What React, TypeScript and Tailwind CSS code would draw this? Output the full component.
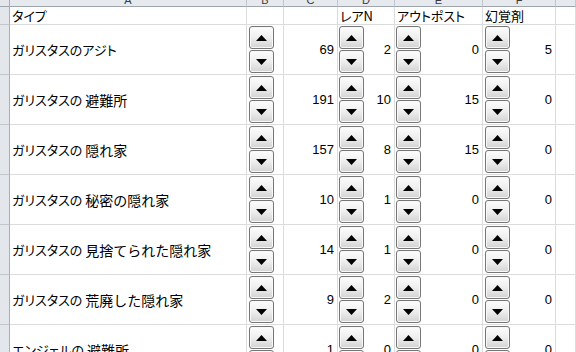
import React from "react";

const rows: [string, number, number, number, number][] = [
  ["ガリスタスのアジト", 69, 2, 0, 5],
  ["ガリスタスの避難所", 191, 10, 15, 0],
  ["ガリスタスの隠れ家", 157, 8, 15, 0],
  ["ガリスタスの秘密の隠れ家", 10, 1, 0, 0],
  ["ガリスタスの見捨てられた隠れ家", 14, 1, 0, 0],
  ["ガリスタスの荒廃した隠れ家", 9, 2, 0, 0],
  ["エンジェルの避難所", 1, 0, 0, 0],
];

const GRID = "grid grid-cols-[10px_237px_37px_54px_57px_88px_73px_1fr]";
const CELL = "border-r border-b border-[#dadcdd] bg-white";
const RH = "border-r border-b border-r-[#a9aeb4] border-b-[#c3c7cc] bg-[#e3e7ec]";
const JP = "font-['Noto_Sans_CJK_JP',sans-serif] [font-feature-settings:'palt'] text-[13px] text-black";
const JPN = "font-['Noto_Sans_CJK_JP',sans-serif] text-[14px] text-black";
const NUM = "font-['Liberation_Sans',sans-serif] text-[13px] text-black";

function Btn({ up }: { up: boolean }) {
  return (
    <div className="w-[25px] h-[23px] rounded-[3px] border border-[#767676] bg-linear-to-b from-[#fdfdfd] via-[#eeeeee] to-[#d3d3d3] flex items-center justify-center shadow-[inset_0_0_0_1px_#f8f8f8]">
      <svg width="11" height="6" viewBox="0 0 11 6">
        <path d={up ? "M5.5 0 L11 6 L0 6 Z" : "M0 0 L11 0 L5.5 6 Z"} fill="#000" />
      </svg>
    </div>
  );
}

function Spin() {
  return (
    <div className="flex flex-col gap-[1px]">
      <Btn up />
      <Btn up={false} />
    </div>
  );
}

function Num({ v }: { v: number }) {
  return <span className={`${NUM} ml-auto pr-[3px] leading-none`}>{v}</span>;
}

function Name({ text }: { text: string }) {
  const idx = text.indexOf("の");
  const prefix = text.slice(0, idx + 1);
  const rest = text.slice(idx + 1);
  const allKana = /^[\u30A0-\u30FF]*$/.test(rest);
  if (allKana) {
    return <span className={`${JP} text-[13.5px] leading-none whitespace-nowrap`}>{text}</span>;
  }
  return (
    <span className="flex items-center whitespace-nowrap leading-none">
      <span className={`${JP} text-[13.5px] leading-none`}>{prefix}</span>
      <span className={`${JPN} leading-none ml-[3px]`}>{rest}</span>
    </span>
  );
}

export default function App() {
  const letters = ["A", "B", "C", "D", "E", "F", ""];
  return (
    <div className="w-[576px] h-[352px] overflow-hidden bg-white">
      <div className={GRID}>
        {/* column header */}
        <div className="h-[7px] border-r border-b border-r-[#a9aeb4] border-b-[#9fa5ad] bg-[#e3e7ec]" />
        {letters.map((l, i) => (
          <div
            key={i}
            className="h-[7px] overflow-hidden border-r border-b border-r-[#c3c7cc] border-b-[#9fa5ad] bg-[#e6e9ed] flex items-end justify-center"
          >
            <span className="font-['Liberation_Sans',sans-serif] text-[11px] leading-[11px] text-[#3a3a3a]">{l}</span>
          </div>
        ))}

        {/* row 1 header titles */}
        <div className={`${RH} h-[18px]`} />
        <div className={`${CELL} h-[18px] flex items-end pl-[2px]`}>
          <span className={`${JP} leading-[16px]`}>タイプ</span>
        </div>
        <div className={`${CELL} h-[18px]`} />
        <div className={`${CELL} h-[18px]`} />
        <div className={`${CELL} h-[18px] flex items-end pl-[2px]`}>
          <span className={`${JP} leading-[16px]`}>レアN</span>
        </div>
        <div className={`${CELL} h-[18px] flex items-end pl-[2px]`}>
          <span className={`${JP} leading-[16px]`}>アウトポスト</span>
        </div>
        <div className={`${CELL} h-[18px] flex items-end pl-[2px]`}>
          <span className={`${JP} leading-[16px]`}>幻覚剤</span>
        </div>
        <div className={`${CELL} h-[18px]`} />

        {rows.map(([name, c, d, e, f], i) => (
          <React.Fragment key={i}>
            <div className={`${RH} h-[50px]`} />
            <div className={`${CELL} h-[50px] flex items-center pl-[2px]`}>
              <Name text={name} />
            </div>
            <div className={`${CELL} h-[50px] flex items-center pl-[2px]`}>
              <Spin />
            </div>
            <div className={`${CELL} h-[50px] flex items-center`}>
              <Num v={c} />
            </div>
            <div className={`${CELL} h-[50px] flex items-center pl-[1px]`}>
              <Spin />
              <Num v={d} />
            </div>
            <div className={`${CELL} h-[50px] flex items-center pl-[1px]`}>
              <Spin />
              <Num v={e} />
            </div>
            <div className={`${CELL} h-[50px] flex items-center pl-[2px]`}>
              <Spin />
              <Num v={f} />
            </div>
            <div className={`${CELL} h-[50px]`} />
          </React.Fragment>
        ))}
      </div>
    </div>
  );
}
